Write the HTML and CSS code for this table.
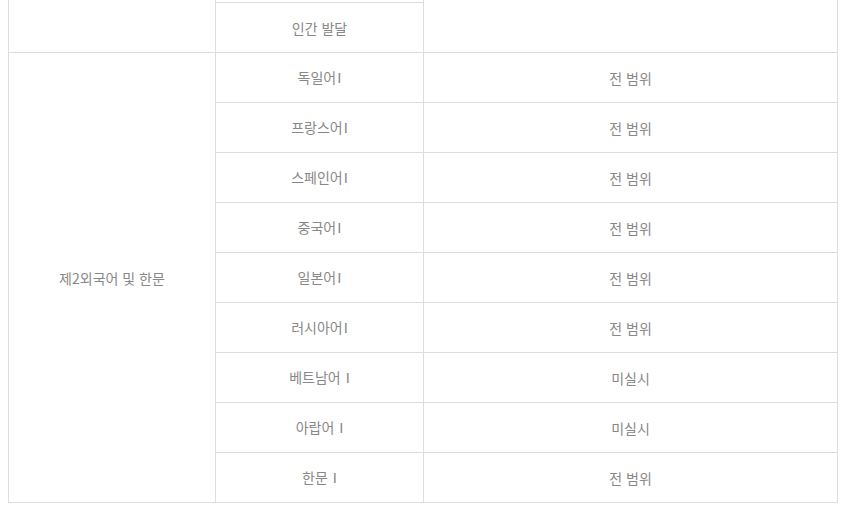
FILE: index.html
```html
<!DOCTYPE html>
<html lang="ko">
<head>
<meta charset="utf-8">
<link rel="stylesheet" href="styles.css">
</head>
<body>
<table class="exam">
  <colgroup>
    <col class="c1"><col class="c2"><col class="c3">
  </colgroup>
  <tr class="stub">
    <td class="span" rowspan="2"></td>
    <td class="stub-cell"></td>
    <td class="span" rowspan="2"></td>
  </tr>
  <tr><td>인간 발달</td></tr>
  <tr>
    <td rowspan="9">제2외국어 및 한문</td>
    <td>독일어<span class="rn">Ⅰ</span></td><td>전 범위</td>
  </tr>
  <tr><td>프랑스어<span class="rn">Ⅰ</span></td><td>전 범위</td></tr>
  <tr><td>스페인어<span class="rn">Ⅰ</span></td><td>전 범위</td></tr>
  <tr><td>중국어<span class="rn">Ⅰ</span></td><td>전 범위</td></tr>
  <tr><td>일본어<span class="rn">Ⅰ</span></td><td>전 범위</td></tr>
  <tr><td>러시아어<span class="rn">Ⅰ</span></td><td>전 범위</td></tr>
  <tr><td>베트남어 <span class="rn">Ⅰ</span></td><td>미실시</td></tr>
  <tr><td>아랍어 <span class="rn">Ⅰ</span></td><td>미실시</td></tr>
  <tr><td>한문 <span class="rn">Ⅰ</span></td><td>전 범위</td></tr>
</table>
</body>
</html>
```
FILE: styles.css
```css
html, body {
  margin: 0;
  padding: 0;
  background: #fff;
}
body {
  font-family: "Noto Sans CJK KR", "Noto Sans", sans-serif;
  font-size: 14px;
  color: #888;
}
.exam {
  border-collapse: collapse;
  margin: 0 0 0 8px;
  width: 829px;
  table-layout: fixed;
}
.c1 { width: 207px; }
.c2 { width: 208px; }
.c3 { width: 414px; }
.exam td {
  border: 1px solid #ddd;
  height: 49px;
  padding: 0;
  text-align: center;
  vertical-align: middle;
  line-height: 20px;
}
.exam .stub td.stub-cell {
  height: 2px;
  border-top: none;
}
.exam .stub td.span {
  border-top: none;
}
.rn {
  font-family: "DejaVu Sans", sans-serif;
  font-size: 14px;
  padding-left: 1px;
}
```
